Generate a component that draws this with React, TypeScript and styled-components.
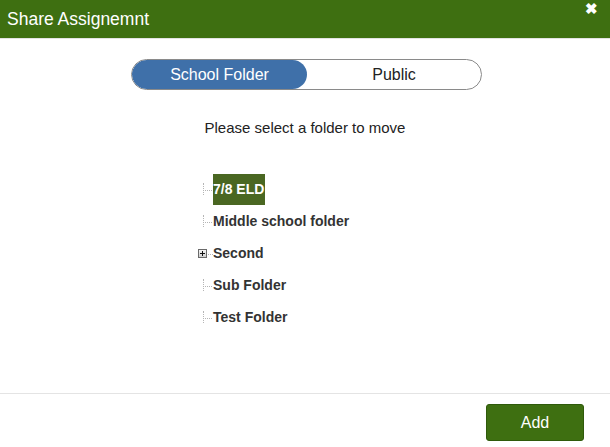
import React, { useState } from "react";
import styled, { createGlobalStyle } from "styled-components";

const Global = createGlobalStyle`
  html, body { margin: 0; padding: 0; background: #fff; }
  body { font-family: "Liberation Sans", Arial, sans-serif; }
  * { box-sizing: border-box; }
`;

const Modal = styled.div`
  width: 610px;
  height: 447px;
  display: flex;
  flex-direction: column;
  background: #fff;
`;

const Header = styled.div`
  height: 39px;
  background: #3e6f11;
  border-bottom: 1px solid #e3e3e3;
  display: flex;
  align-items: flex-start;
  justify-content: space-between;
  padding: 0 12px 0 7px;
  color: #fff;
`;

const Title = styled.h1`
  margin: 0;
  font-size: 17.5px;
  font-weight: normal;
  line-height: 20px;
  padding-top: 9px;
`;

const Close = styled.span`
  font-size: 15px;
  font-weight: bold;
  line-height: 16px;
  padding-top: 1px;
`;

const Body = styled.div`
  flex: 1;
  display: flex;
  flex-direction: column;
  align-items: center;
  padding: 20px 0 0 3px;
  border-bottom: 1px solid #e4e4e4;
`;

const Toggle = styled.div`
  width: 351px;
  height: 31px;
  border: 1px solid #8a8a8a;
  border-radius: 16px;
  display: flex;
  overflow: hidden;
`;

const ToggleOption = styled.button<{ $active?: boolean }>`
  flex: ${(p) => (p.$active ? "0 0 175px" : "1")};
  border: none;
  margin: 0;
  border-radius: 16px;
  background: ${(p) => (p.$active ? "#3f70a9" : "transparent")};
  color: ${(p) => (p.$active ? "#fff" : "#222")};
  font-family: "Liberation Sans", Arial, sans-serif;
  font-size: 16px;
  cursor: pointer;
  padding: 0;
`;

const Prompt = styled.p`
  margin: 29px 0 0 -3px;
  font-size: 15px;
  color: #222;
  line-height: 18px;
`;

const Tree = styled.ul`
  list-style: none;
  margin: 36px 0 0 195px;
  padding: 0;
  align-self: flex-start;
  display: flex;
  flex-direction: column;
`;

const Node = styled.li`
  display: flex;
  align-items: center;
  height: 32.2px;
`;

const Connector = styled.span`
  width: 15px;
  height: 31px;
  position: relative;
  flex: 0 0 15px;
  &::before {
    content: "";
    position: absolute;
    left: 5px;
    top: 9px;
    height: 12px;
    border-left: 1px dotted #b5b5b5;
  }
  &::after {
    content: "";
    position: absolute;
    left: 5px;
    top: 16px;
    width: 9px;
    border-top: 1px dotted #b5b5b5;
  }
`;

const Expander = styled.span`
  width: 15px;
  height: 31px;
  flex: 0 0 15px;
  display: flex;
  align-items: center;
  position: relative;
  &::after {
    content: "";
    position: absolute;
    left: 10px;
    top: 16px;
    width: 5px;
    border-top: 1px dotted #b5b5b5;
  }
`;

const PlusBox = styled.span`
  width: 9px;
  height: 9px;
  border: 1px solid #6a6a6a;
  background: linear-gradient(#f4f4f4, #cfcfcf);
  position: relative;
  margin-top: 1px;
  &::before {
    content: "";
    position: absolute;
    left: 1px;
    top: 3px;
    width: 5px;
    height: 1px;
    background: #111;
  }
  &::after {
    content: "";
    position: absolute;
    left: 3px;
    top: 1px;
    width: 1px;
    height: 5px;
    background: #111;
  }
`;

const Label = styled.span<{ $selected?: boolean }>`
  font-size: 14px;
  font-weight: bold;
  color: ${(p) => (p.$selected ? "#fff" : "#333")};
  background: ${(p) => (p.$selected ? "#4a6722" : "transparent")};
  height: 31px;
  line-height: 31px;
  padding-right: ${(p) => (p.$selected ? "1px" : "0")};
`;

const Footer = styled.div`
  height: 53px;
  display: flex;
  justify-content: flex-end;
  align-items: flex-start;
  padding: 10px 26px 0 0;
`;

const AddButton = styled.button`
  width: 98px;
  height: 37px;
  background: #3e6f11;
  color: #fff;
  border: 1px solid #2f5a0b;
  border-radius: 3px;
  font-family: "Liberation Sans", Arial, sans-serif;
  font-size: 16px;
  cursor: pointer;
`;

const folders = [
  { name: "7/8 ELD", selected: true },
  { name: "Middle school folder" },
  { name: "Second", expandable: true },
  { name: "Sub Folder" },
  { name: "Test Folder" },
];

export default function App() {
  const [tab, setTab] = useState<"school" | "public">("school");
  return (
    <>
      <Global />
      <Modal>
        <Header>
          <Title>Share Assignemnt</Title>
          <Close>✖</Close>
        </Header>
        <Body>
          <Toggle>
            <ToggleOption $active={tab === "school"} onClick={() => setTab("school")}>
              School Folder
            </ToggleOption>
            <ToggleOption $active={tab === "public"} onClick={() => setTab("public")}>
              Public
            </ToggleOption>
          </Toggle>
          <Prompt>Please select a folder to move</Prompt>
          <Tree>
            {folders.map((f) => (
              <Node key={f.name}>
                {f.expandable ? (
                  <Expander>
                    <PlusBox />
                  </Expander>
                ) : (
                  <Connector />
                )}
                <Label $selected={f.selected}>{f.name}</Label>
              </Node>
            ))}
          </Tree>
        </Body>
        <Footer>
          <AddButton>Add</AddButton>
        </Footer>
      </Modal>
    </>
  );
}
